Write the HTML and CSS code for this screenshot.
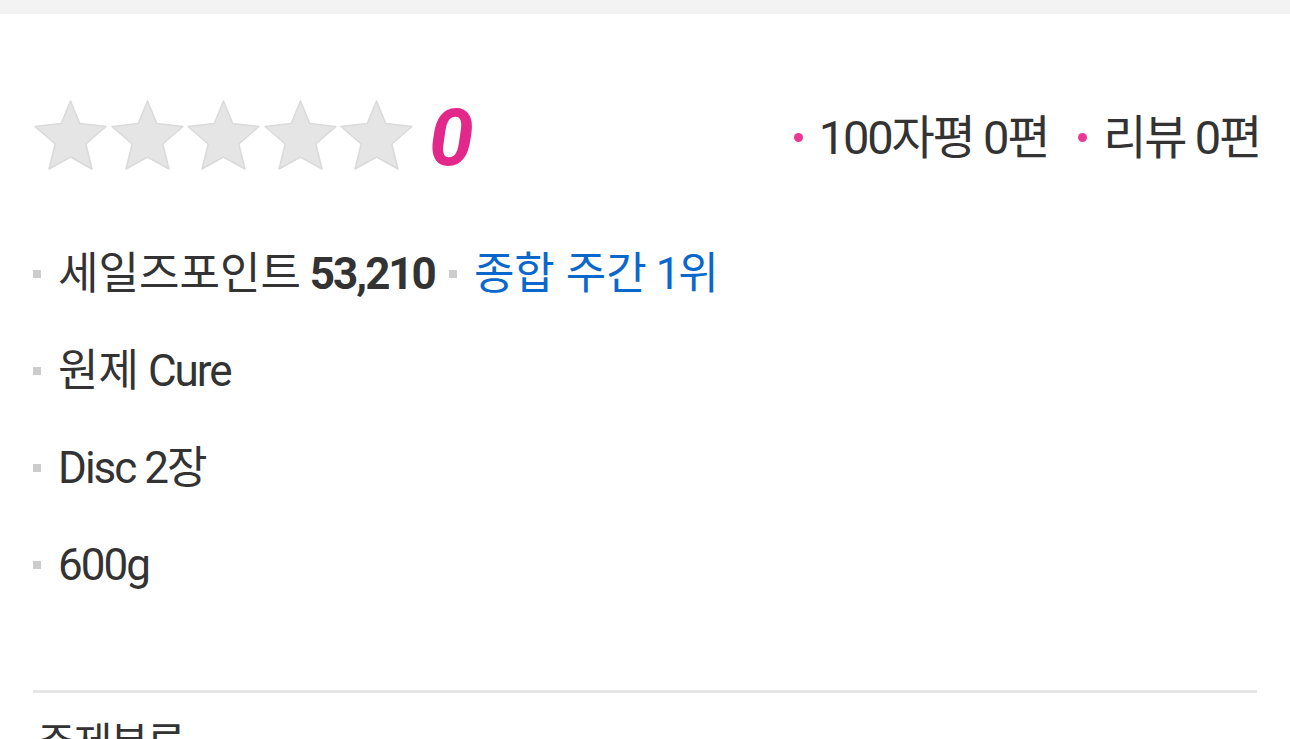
FILE: index.html
```html
<!DOCTYPE html>
<html lang="ko">
<head>
<meta charset="utf-8">
<link rel="stylesheet" href="styles.css">
</head>
<body>
<div class="topbar"></div>
<div class="main">
  <div class="rating">
    <div class="stars-wrap">
      <div class="stars">
        <svg class="star" viewBox="0 0 73 70"><polygon points="36.5,1 45.8,23.5 72,26.5 51.8,44 58,69 36.5,57 15,69 21.2,44 1,26.5 27.2,23.5"/></svg>
        <svg class="star" viewBox="0 0 73 70"><polygon points="36.5,1 45.8,23.5 72,26.5 51.8,44 58,69 36.5,57 15,69 21.2,44 1,26.5 27.2,23.5"/></svg>
        <svg class="star" viewBox="0 0 73 70"><polygon points="36.5,1 45.8,23.5 72,26.5 51.8,44 58,69 36.5,57 15,69 21.2,44 1,26.5 27.2,23.5"/></svg>
        <svg class="star" viewBox="0 0 73 70"><polygon points="36.5,1 45.8,23.5 72,26.5 51.8,44 58,69 36.5,57 15,69 21.2,44 1,26.5 27.2,23.5"/></svg>
        <svg class="star" viewBox="0 0 73 70"><polygon points="36.5,1 45.8,23.5 72,26.5 51.8,44 58,69 36.5,57 15,69 21.2,44 1,26.5 27.2,23.5"/></svg>
      </div>
      <span class="score">0</span>
    </div>
    <div class="counts">
      <span class="count"><i class="dot"></i>100자평 0편</span>
      <span class="count"><i class="dot"></i>리뷰 0편</span>
    </div>
  </div>
  <ul class="info">
    <li><i class="sq"></i><span><span class="ko">세일즈포인트</span> <b>53,210</b></span><i class="sq sq-mid"></i><span class="blue"><span class="ko">종합 주간</span> 1위</span></li>
    <li><i class="sq"></i><span><span class="ko">원제</span> Cure</span></li>
    <li><i class="sq"></i><span>Disc 2장</span></li>
    <li><i class="sq"></i><span>600g</span></li>
  </ul>
  <div class="divider"></div>
  <h2 class="section">주제분류</h2>
</div>
</body>
</html>
```
FILE: styles.css
```css
html, body {
  margin: 0;
  padding: 0;
  background: #fff;
  overflow: hidden;
}
body {
  font-family: Roboto, "Noto Sans CJK KR", sans-serif;
  color: #333;
}
.topbar {
  height: 14px;
  background: #f3f3f3;
}
.main {
  padding: 0 33px;
}
.rating {
  display: flex;
  justify-content: space-between;
  align-items: center;
  height: 72px;
  margin-top: 85px;
}
.stars-wrap {
  display: flex;
  align-items: center;
}
.stars {
  display: flex;
  gap: 1.5px;
}
.star {
  width: 75px;
  height: 70px;
  display: block;
}
.star polygon {
  fill: #e5e5e5;
  stroke: #dadada;
  stroke-width: 1.5;
  stroke-linejoin: round;
}
.score {
  margin-left: 15px;
  margin-top: 6px;
  font-size: 80px;
  font-weight: 700;
  font-style: italic;
  color: #e2288a;
  line-height: 1;
  letter-spacing: -2px;
}
.counts {
  display: flex;
  align-items: center;
  gap: 30px;
  margin-top: 4px;
  margin-right: -3px;
}
.count {
  display: flex;
  align-items: center;
  font-size: 47px;
  letter-spacing: -2.2px;
  line-height: 1;
}
.dot {
  width: 9px;
  height: 9px;
  border-radius: 50%;
  background: #ec3894;
  margin-right: 16px;
}
.info {
  list-style: none;
  margin: 54px 0 0;
  padding: 0;
}
.info li {
  display: flex;
  align-items: center;
  height: 97px;
  font-size: 44px;
  letter-spacing: -2px;
  line-height: 1;
}
.info .ko {
  letter-spacing: 0;
}
.info b {
  font-weight: 700;
}
.sq {
  width: 8px;
  height: 8px;
  background: #cccccc;
  margin-right: 17px;
  flex: none;
}
.sq-mid {
  margin-left: 14px;
  margin-right: 17px;
}
.blue {
  color: #0a68cc;
}
.divider {
  height: 3px;
  background: #e6e6e6;
  margin-top: 77px;
}
.section {
  margin: 30px 0 0 4px;
  font-size: 42px;
  font-weight: 400;
  letter-spacing: -2px;
  line-height: 1;
  color: #333;
}
```
